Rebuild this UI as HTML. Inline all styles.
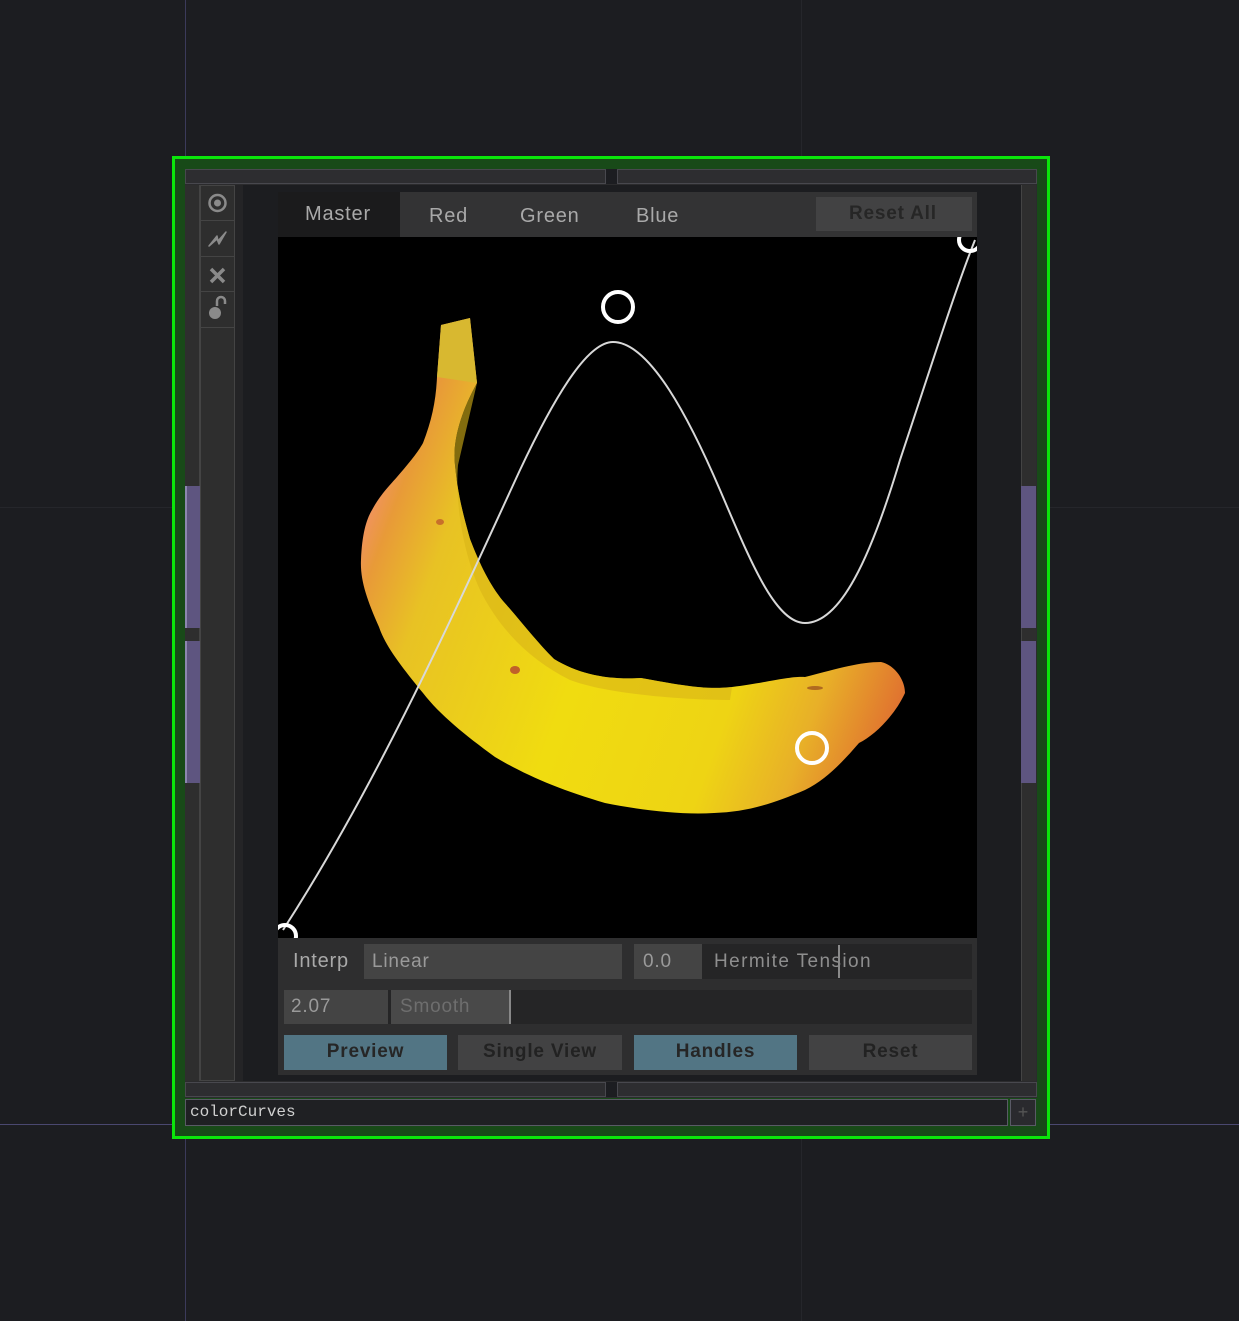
<!DOCTYPE html>
<html><head><meta charset="utf-8"><style>
*{margin:0;padding:0;box-sizing:border-box}
body{width:1239px;height:1321px;background:#1c1d21;position:relative;overflow:hidden;font-family:"Liberation Sans","DejaVu Sans",sans-serif}
.a{position:absolute}
.t{position:absolute;font-size:20px;color:#a9a9a9;line-height:1;letter-spacing:0.8px;white-space:nowrap}
</style></head><body>
<!-- guide lines -->
<div class="a" style="left:185px;top:0;width:1px;height:1321px;background:#3b3a5a"></div>
<div class="a" style="left:801px;top:0;width:1px;height:1321px;background:#25262b"></div>
<div class="a" style="left:0;top:507px;width:1239px;height:1px;background:#25262b"></div>
<div class="a" style="left:0;top:1124px;width:1239px;height:1px;background:#4a4870"></div>
<!-- green frame -->
<div class="a" style="left:172px;top:156px;width:878px;height:983px;border:3px solid #0be60b;background:#184a18"></div>
<!-- panel -->
<div class="a" style="left:185px;top:169px;width:852px;height:929px;background:#2b2b2d"></div>
<div class="a" style="left:185px;top:169px;width:421px;height:15px;background:#2d2d30;border:1px solid #48484e"></div>
<div class="a" style="left:617px;top:169px;width:420px;height:15px;background:#2d2d30;border:1px solid #48484e"></div>
<div class="a" style="left:185px;top:1082px;width:421px;height:15px;background:#2d2d30;border:1px solid #48484e"></div>
<div class="a" style="left:617px;top:1082px;width:420px;height:15px;background:#2d2d30;border:1px solid #48484e"></div>
<div class="a" style="left:606px;top:169px;width:11px;height:15px;background:#1c1d21"></div>
<div class="a" style="left:606px;top:1082px;width:11px;height:15px;background:#1c1d21"></div>
<!-- side bars -->
<div class="a" style="left:185px;top:185px;width:15px;height:896px;background:#2e2e2e;border-right:1px solid #444"></div>
<div class="a" style="left:185px;top:486px;width:15px;height:142px;background:#5e5580;border-left:2px solid #8c86b0"></div>
<div class="a" style="left:185px;top:641px;width:15px;height:142px;background:#5e5580;border-left:2px solid #8c86b0"></div>
<div class="a" style="left:1021px;top:185px;width:15px;height:896px;background:#2e2e2e;border-left:1px solid #444"></div>
<div class="a" style="left:1021px;top:486px;width:15px;height:142px;background:#5e5580"></div>
<div class="a" style="left:1021px;top:641px;width:15px;height:142px;background:#5e5580"></div>
<!-- icon column -->
<div class="a" style="left:200px;top:185px;width:35px;height:896px;background:#2e2e2e;border:1px solid #444"></div>
<div class="a" style="left:201px;top:220px;width:33px;height:1px;background:#444"></div>
<div class="a" style="left:201px;top:256px;width:33px;height:1px;background:#444"></div>
<div class="a" style="left:201px;top:291px;width:33px;height:1px;background:#444"></div>
<div class="a" style="left:201px;top:327px;width:33px;height:1px;background:#444"></div>
<svg class="a" style="left:200px;top:185px" width="35" height="145">
<circle cx="17.5" cy="18" r="8" fill="none" stroke="#8a8a8a" stroke-width="2.5"/><circle cx="17.5" cy="18" r="3.5" fill="#8a8a8a"/>
<path d="M9 61 L17 51 L18 56 L26 47 L19 59 L17 54 Z" fill="#8a8a8a" stroke="#8a8a8a" stroke-width="1.5" stroke-linejoin="round"/>
<path d="M11 84 L24 97 M24 84 L11 97" stroke="#8a8a8a" stroke-width="3.5"/>
<circle cx="15" cy="128" r="6" fill="#8a8a8a"/><path d="M17 121 V116 a4 4 0 0 1 8 0 V119" fill="none" stroke="#8a8a8a" stroke-width="2.5"/>
</svg>
<!-- content -->
<div class="a" style="left:235px;top:185px;width:786px;height:896px;background:#242426"></div>
<div class="a" style="left:243px;top:185px;width:778px;height:896px;background:#1c1d20"></div>
<!-- tab bar -->
<div class="a" style="left:278px;top:192px;width:699px;height:45px;background:#333334"></div>
<div class="a" style="left:278px;top:192px;width:122px;height:45px;background:#1b1b1c"></div>
<div class="t" style="left:305px;top:204px">Master</div>
<div class="t" style="left:429px;top:206px">Red</div>
<div class="t" style="left:520px;top:206px">Green</div>
<div class="t" style="left:636px;top:206px">Blue</div>
<div class="a" style="left:816px;top:197px;width:156px;height:34px;background:#424243"></div>
<div class="t" style="left:849px;top:204px;color:#262626;font-weight:bold;font-size:19px">Reset All</div>
<!-- viewport -->
<svg class="a" style="left:278px;top:237px" width="699" height="701">
<defs>
<linearGradient id="g" gradientUnits="userSpaceOnUse" x1="360" y1="500" x2="905" y2="700">
<stop offset="0" stop-color="#f49070"/><stop offset="0.06" stop-color="#e89a38"/><stop offset="0.16" stop-color="#e8c224"/><stop offset="0.45" stop-color="#f0dc10"/><stop offset="0.72" stop-color="#eed414"/><stop offset="0.86" stop-color="#e8b028"/><stop offset="1" stop-color="#e07030"/>
</linearGradient>
</defs>
<g transform="translate(-278,-237)">
<rect x="278" y="237" width="699" height="701" fill="#000"/>
<path d="M441,325 L470,318 L477,383 C462,410 452,440 455,465 C458,495 462,510 470,539 C480,565 490,585 503,601 C520,620 535,640 554,659 C580,675 610,680 641,678 C680,685 705,690 732,687 C770,682 790,676 805,677 C840,668 860,662 881,662 C895,665 905,680 905,693 C895,715 875,735 859,743 C840,765 825,780 805,790 C770,805 745,812 714,813 C680,815 640,810 605,803 C560,790 525,775 495,757 C465,735 440,715 423,693 C400,665 385,645 379,627 C367,600 360,580 361,560 C362,535 366,520 372,510 C380,495 390,485 397,477 C410,462 418,452 423,443 C432,420 436,400 437,377 Z" fill="url(#g)"/>
<path d="M477,383 C462,410 452,440 455,465 C458,495 462,510 470,539 C480,565 490,585 503,601 C520,620 535,640 554,659 C580,675 610,680 641,678 C680,685 705,690 732,687 L730,700 C690,700 610,695 570,680 C530,660 500,630 480,590 C462,550 455,500 458,465 Z" fill="#d8b418" opacity="0.6"/>
<path d="M441,325 L470,318 L477,383 L437,377 Z" fill="#d8b830"/>
<ellipse cx="440" cy="522" rx="4" ry="3" fill="#c8702a"/>
<ellipse cx="515" cy="670" rx="5" ry="4" fill="#c0602a"/>
<ellipse cx="815" cy="688" rx="8" ry="2" fill="#b06a20"/>
<path d="M283,930 C380,780 460,600 520,470 C560,385 590,342 613,342 C650,342 690,420 720,490 C750,560 775,623 805,623 C840,623 870,560 900,460 C930,370 955,290 975,240" fill="none" stroke="#d8d8d8" stroke-width="2"/>
<circle cx="618" cy="307" r="15" fill="none" stroke="#fff" stroke-width="4"/>
<circle cx="812" cy="748" r="15" fill="none" stroke="#fff" stroke-width="4"/>
<circle cx="970" cy="240" r="11" fill="none" stroke="#fff" stroke-width="4"/>
<circle cx="285" cy="936" r="11" fill="none" stroke="#fff" stroke-width="4"/>
</g>
</svg>
<!-- controls -->
<div class="a" style="left:278px;top:938px;width:699px;height:137px;background:#2e2e2f"></div>
<div class="t" style="left:293px;top:951px;font-size:20px">Interp</div>
<div class="a" style="left:364px;top:944px;width:258px;height:35px;background:#444"></div>
<div class="t" style="left:372px;top:952px;font-size:19px;color:#9a9a9a">Linear</div>
<div class="a" style="left:634px;top:944px;width:68px;height:35px;background:#444"></div>
<div class="t" style="left:643px;top:952px;font-size:19px;color:#9a9a9a">0.0</div>
<div class="a" style="left:702px;top:944px;width:270px;height:35px;background:#252526"></div>
<div class="t" style="left:714px;top:952px;font-size:19px;color:#8e8e8e;letter-spacing:1.4px">Hermite Tension</div>
<div class="a" style="left:838px;top:945px;width:2px;height:33px;background:#8a8a8a"></div>
<div class="a" style="left:284px;top:990px;width:688px;height:34px;background:#252526"></div>
<div class="a" style="left:284px;top:990px;width:104px;height:34px;background:#444"></div>
<div class="t" style="left:291px;top:997px;font-size:19px;color:#9a9a9a">2.07</div>
<div class="a" style="left:391px;top:990px;width:120px;height:34px;background:#494949;border-right:2px solid #888"></div>
<div class="t" style="left:400px;top:997px;font-size:19px;color:#6e6e6e">Smooth</div>
<div class="a" style="left:284px;top:1035px;width:163px;height:35px;background:#527584"></div>
<div class="a" style="left:458px;top:1035px;width:164px;height:35px;background:#424243"></div>
<div class="a" style="left:634px;top:1035px;width:163px;height:35px;background:#527584"></div>
<div class="a" style="left:809px;top:1035px;width:163px;height:35px;background:#424243"></div>
<div class="t" style="left:284px;top:1042px;width:163px;text-align:center;color:#262626;font-weight:bold;font-size:19px">Preview</div>
<div class="t" style="left:458px;top:1042px;width:164px;text-align:center;color:#222;font-weight:bold;font-size:19px">Single View</div>
<div class="t" style="left:634px;top:1042px;width:163px;text-align:center;color:#262626;font-weight:bold;font-size:19px">Handles</div>
<div class="t" style="left:809px;top:1042px;width:163px;text-align:center;color:#222;font-weight:bold;font-size:19px">Reset</div>
<!-- name bar -->
<div class="a" style="left:185px;top:1099px;width:823px;height:27px;background:#1f2023;border:1px solid #5a5a66"></div>
<div class="t" style="left:190px;top:1104px;font-family:'Liberation Mono','DejaVu Sans Mono',monospace;font-size:16px;color:#d0d0d0;letter-spacing:0">colorCurves</div>
<div class="a" style="left:1010px;top:1099px;width:26px;height:27px;background:#2a2a2e;border:1px solid #5a5a66;color:#555;font-size:18px;text-align:center;line-height:24px">+</div>
</body></html>
